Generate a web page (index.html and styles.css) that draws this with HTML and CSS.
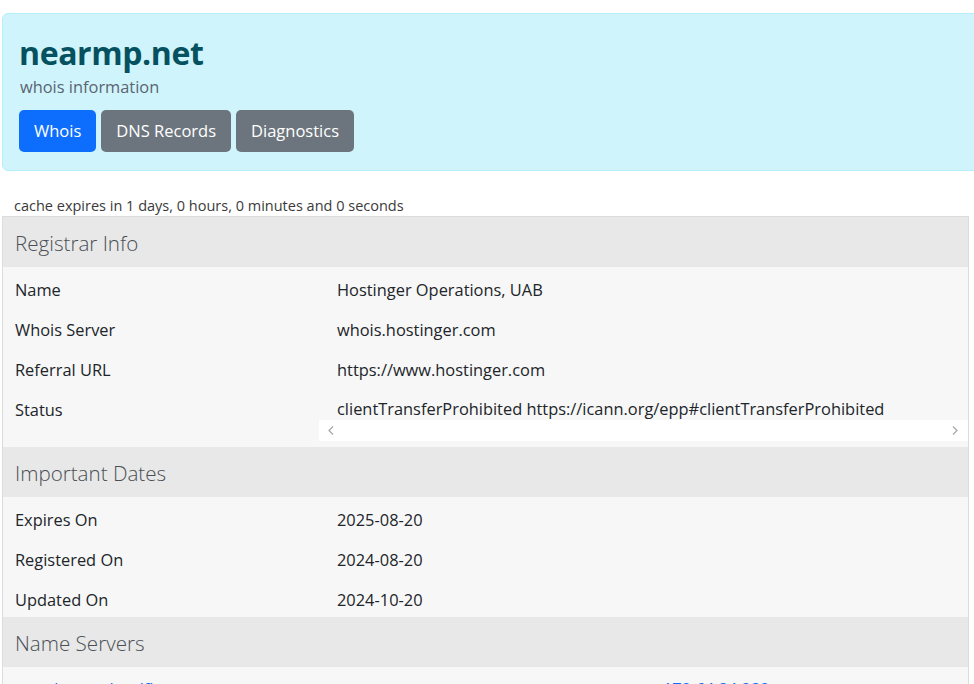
FILE: index.html
```html
<!DOCTYPE html>
<html lang="en">
<head>
<meta charset="utf-8">
<title>nearmp.net - whois information</title>
<link rel="stylesheet" href="styles.css">
</head>
<body>
<div class="page">
  <header class="hero">
    <h1 class="hero-title">nearmp.net</h1>
    <p class="hero-sub">whois information</p>
    <nav class="tabs">
      <a class="btn btn-primary" href="#">Whois</a>
      <a class="btn btn-secondary" href="#">DNS Records</a>
      <a class="btn btn-secondary" href="#">Diagnostics</a>
    </nav>
  </header>

  <p class="cache">cache expires in 1 days, 0 hours, 0 minutes and 0 seconds</p>

  <section class="info">
    <div class="section-head">Registrar Info</div>
    <div class="row">
      <div class="label">Name</div>
      <div class="value">Hostinger Operations, UAB</div>
    </div>
    <div class="row">
      <div class="label">Whois Server</div>
      <div class="value">whois.hostinger.com</div>
    </div>
    <div class="row">
      <div class="label">Referral URL</div>
      <div class="value">https://www.hostinger.com</div>
    </div>
    <div class="row row-status">
      <div class="label">Status</div>
      <div class="value value-scroll">
        <div class="scroll-text">clientTransferProhibited https://icann.org/epp#clientTransferProhibited</div>
        <div class="scrollbar">
          <svg class="chev" width="6" height="9" viewBox="0 0 6 9"><polyline points="5,0.5 1,4.5 5,8.5" fill="none" stroke="#a6a6a6" stroke-width="1.2"/></svg>
          <svg class="chev" width="6" height="9" viewBox="0 0 6 9"><polyline points="1,0.5 5,4.5 1,8.5" fill="none" stroke="#a6a6a6" stroke-width="1.2"/></svg>
        </div>
      </div>
    </div>

    <div class="section-head">Important Dates</div>
    <div class="row">
      <div class="label">Expires On</div>
      <div class="value">2025-08-20</div>
    </div>
    <div class="row">
      <div class="label">Registered On</div>
      <div class="value">2024-08-20</div>
    </div>
    <div class="row">
      <div class="label">Updated On</div>
      <div class="value">2024-10-20</div>
    </div>

    <div class="section-head">Name Servers</div>
    <div class="row row-ns">
      <a class="ns-name" href="#">elsa.ns.cloudflare.com</a>
      <a class="ns-ip" href="#">172.64.34.232</a>
    </div>
  </section>
</div>
</body>
</html>
```

FILE: styles.css
```css
html, body {
  margin: 0;
  padding: 0;
  overflow: hidden;
  background: #ffffff;
}

body {
  font-family: "Open Sans", "Noto Sans", sans-serif;
  color: #212529;
  font-size: 16.4px;
}

.page {
  padding: 13px 0 0 2px;
}

.hero {
  background: #cff4fc;
  border: 1px solid #b6effb;
  border-radius: 6px;
  margin-right: -20px;
  padding: 20px 16px 18px;
}

.hero-title {
  margin: 0;
  font-size: 32px;
  line-height: 38px;
  font-weight: 700;
  color: #055160;
  letter-spacing: -0.4px;
}

.hero-sub {
  margin: 3px 0 11px 1px;
  font-size: 16.4px;
  line-height: 24px;
  color: #5b6470;
}

.tabs {
  display: flex;
  gap: 5px;
}

.btn {
  display: inline-block;
  padding: 9px 15px;
  line-height: 24px;
  font-size: 16.5px;
  color: #ffffff;
  text-decoration: none;
  border-radius: 5px;
}

.btn-primary {
  background: #0d6efd;
}

.btn-secondary {
  background: #6c757d;
}

.cache {
  margin: 27px 0 2px 12px;
  font-size: 14.5px;
  line-height: 16px;
  color: #3a3a3a;
}

.info {
  width: 965px;
  border: 1px solid #dcdcdc;
  border-bottom: none;
}

.section-head {
  height: 50px;
  display: flex;
  align-items: center;
  padding: 2px 12px 0;
  box-sizing: border-box;
  background: #e7e8e7;
  font-size: 20.6px;
  font-weight: 300;
  color: #4a4f55;
}

.row {
  display: grid;
  grid-template-columns: 316px 1fr;
  background: #f7f7f7;
  padding: 11px 0 5px;
  line-height: 24px;
}

.label {
  padding-left: 12px;
}

.value {
  padding-left: 18px;
}

.value-scroll {
  padding-left: 0;
}

.scroll-text {
  padding-left: 18px;
  line-height: 22px;
  white-space: nowrap;
}

.scrollbar {
  height: 21px;
  background: #ffffff;
  display: flex;
  align-items: center;
  justify-content: space-between;
  padding: 0 10px 0 9px;
}

.row-status {
  padding-bottom: 6px;
}

.chev {
  display: block;
}

.row-ns {
  grid-template-columns: 660px 1fr;
  padding-top: 10px;
}

.ns-name {
  padding-left: 42px;
  color: #0d6efd;
  text-decoration: none;
}

.ns-ip {
  color: #0d6efd;
  text-decoration: none;
}
```
